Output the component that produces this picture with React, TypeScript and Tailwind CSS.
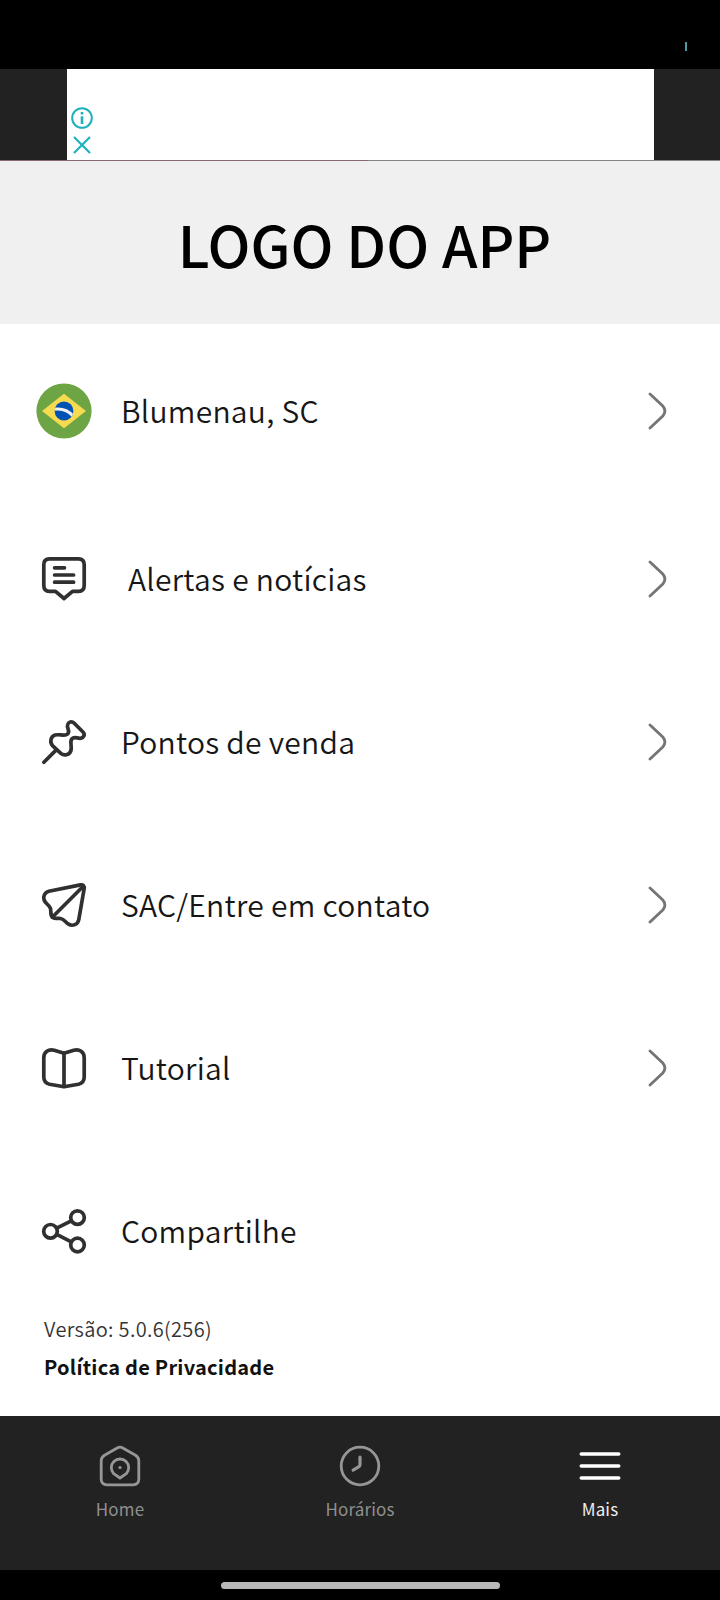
import type { ReactNode } from "react";

interface MenuItem {
  label: string;
  icon: ReactNode;
  rowClass: string;
  labelClass: string;
  arrow: boolean;
}

const iconProps = {
  width: 44,
  height: 44,
  viewBox: "0 0 44 44",
  fill: "none",
  stroke: "#303030",
  strokeWidth: 3.7,
  strokeLinecap: "round" as const,
  strokeLinejoin: "round" as const,
  className: "overflow-visible",
};

const BrazilFlag = () => (
  <svg width="56" height="56" viewBox="0 0 56 56" className="-mx-1.5">
    <defs>
      <clipPath id="globe">
        <circle cx="28" cy="28" r="9.4" />
      </clipPath>
    </defs>
    <circle cx="28" cy="28" r="27.6" fill="#6da544" />
    <path d="M28 10.8 L50 28 L28 45.2 L6 28Z" fill="#f6da50" />
    <circle cx="28" cy="28" r="9.4" fill="#0052b4" />
    <path d="M18 26.2 Q30 24.5 37 33" fill="none" stroke="#f0f0f0" strokeWidth="3" clipPath="url(#globe)" />
  </svg>
);

const AlertIcon = () => (
  <svg {...iconProps}>
    <path d="M7.5 1.8 H36.5 Q42.2 1.8 42.2 7.5 V28.5 Q42.2 34.3 36.5 34.3 H30.5 L22 41.5 L13.5 34.3 H7.5 Q1.8 34.3 1.8 28.5 V7.5 Q1.8 1.8 7.5 1.8Z" />
    <path d="M12.6 10.8 H22.5 M12.6 18 H31.6 M12.6 25.2 H31.6" />
  </svg>
);

const PinIcon = () => (
  <svg {...iconProps}>
    <path d="M1.9 42.2 L14.5 29.6" />
    <path d="M10.5 25.6 C7.8 22.5 8.3 16.5 13 15.1 C17.5 13.8 21.5 16.5 25.2 14.2 C29 11.5 24.5 8.4 25.6 4.8 C26.3 1.8 29.8 .8 32 3 L41 12 C43.5 14.6 41.8 17.5 39 18.2 C35.6 19 32.5 15.8 29.8 19 C27.3 22.2 30.5 26.5 28.8 31 C27.2 35.2 22 36 18.8 33.4Z" />
  </svg>
);

const SendIcon = () => (
  <svg {...iconProps}>
    <path d="M6.8 8.2 L38.5 1.9 Q42.8 1.5 42.1 6 L36.8 36.5 C36 41.5 30.5 43.6 26.5 41.2 C23 39 22.5 36.2 18.5 35.5 C15.5 35 13.5 36.2 11 34.7 C7.5 32.4 9.7 28.5 8.3 25 C6.8 21.5 3.5 20.8 2.1 17 C.8 13 2.8 9.4 6.8 8.2Z" />
    <path d="M10.5 34 L41 3.5" />
  </svg>
);

const BookIcon = () => (
  <svg {...iconProps}>
    <path d="M22 7.2 L12.2 4.3 C6.5 2.8 1.8 6 1.8 11.5 V31 C1.8 35 4 37.4 7.5 38.2 L22 40.8 L36.5 38.2 C40 37.4 42.2 35 42.2 31 V11.5 C42.2 6 37.5 2.8 31.8 4.3Z M22 7.2 V40.5" />
  </svg>
);

const ShareIcon = () => (
  <svg {...iconProps}>
    <circle cx="8.5" cy="22.3" r="6.8" />
    <circle cx="35.5" cy="8.6" r="6.8" />
    <circle cx="35.5" cy="36" r="6.8" />
    <path d="M14.7 19.2 L29.3 11.8 M14.7 25.4 L29.3 32.8" />
  </svg>
);

const Arrow = () => (
  <svg width="20" height="38" viewBox="0 0 20 38" fill="none" stroke="#757575" strokeWidth="2.8" strokeLinecap="round">
    <path d="M2 1.9 L14.8 14 Q19 19 14.8 24 L2 36.1" />
  </svg>
);

const menuItems: MenuItem[] = [
  { label: "Blumenau, SC", icon: <BrazilFlag />, rowClass: "h-[173px]", labelClass: "ml-[35px]", arrow: true },
  { label: "Alertas e notícias", icon: <AlertIcon />, rowClass: "h-[163px]", labelClass: "ml-[42px]", arrow: true },
  { label: "Pontos de venda", icon: <PinIcon />, rowClass: "h-[163px]", labelClass: "ml-[35px]", arrow: true },
  { label: "SAC/Entre em contato", icon: <SendIcon />, rowClass: "h-[163px]", labelClass: "ml-[35px]", arrow: true },
  { label: "Tutorial", icon: <BookIcon />, rowClass: "h-[163px]", labelClass: "ml-[35px]", arrow: true },
  { label: "Compartilhe", icon: <ShareIcon />, rowClass: "h-[163px]", labelClass: "ml-[35px]", arrow: false },
];

const AdBanner = () => (
  <div className="flex h-[91px] justify-center bg-[#222222]">
    <div className="flex w-[587px] flex-col gap-[7px] bg-white pl-[4.5px] pt-[38px]">
      <svg width="22" height="22" viewBox="0 0 22 22" fill="none" stroke="#1fb0bd" strokeWidth="2">
        <circle cx="11" cy="11" r="9.8" />
        <path d="M11 5 V7.5 M11 9.2 V17" strokeWidth="2.6" />
      </svg>
      <svg width="22" height="18" viewBox="0 0 22 18" fill="none" stroke="#1fb0bd" strokeWidth="2.2">
        <path d="M3 1 L19 17 M19 1 L3 17" />
      </svg>
    </div>
  </div>
);

const MenuRow = ({ item }: { item: MenuItem }) => (
  <button className={`flex w-full items-center pl-[42px] pr-[52px] text-left ${item.rowClass}`}>
    {item.icon}
    <span className={`pb-0.5 text-[30px] font-[350] leading-[46px] tracking-[0.27px] text-[#161616] ${item.labelClass}`}>
      {item.label}
    </span>
    {item.arrow && (
      <span className="ml-auto">
        <Arrow />
      </span>
    )}
  </button>
);

const BottomNav = () => (
  <nav className="grid h-[154px] grid-cols-3 bg-[#222222] pt-[29px] text-[17px] leading-[26px] tracking-[0.15px]">
    <div className="flex flex-col items-center gap-[9px] text-[#8f8f8f]">
      <svg width="42" height="42" viewBox="-1 -1 42 42" fill="none" stroke="#969696" strokeWidth="2.8" strokeLinejoin="round">
        <path d="M17.2 2 Q20 .4 22.8 2 L35.5 9.3 Q38.8 11.3 38.8 15 V33 Q38.8 38.8 33 38.8 H7 Q1.2 38.8 1.2 33 V15 Q1.2 11.3 4.5 9.3Z" />
        <path d="M20 32 L13.7 27.7 A8.7 8.7 0 1 1 26.3 27.7Z" />
        <circle cx="20" cy="21.5" r="1.6" fill="#969696" stroke="none" />
      </svg>
      <span>Home</span>
    </div>
    <div className="flex flex-col items-center gap-[9px] text-[#8f8f8f]">
      <svg width="42" height="42" viewBox="-1 -1 42 42" fill="none" stroke="#969696" strokeWidth="2.8" strokeLinecap="round">
        <circle cx="20" cy="20" r="18.8" />
        <path d="M20 11.2 V18.5 Q20 20 18.5 20.9 L13.1 24.1" strokeWidth="3.2" />
      </svg>
      <span>Horários</span>
    </div>
    <div className="flex flex-col items-center gap-[9px] text-[#eeeeee]">
      <svg width="42" height="42" viewBox="-1 -1 42 42" stroke="#ffffff" strokeWidth="3.4" strokeLinecap="round">
        <path d="M1.2 8 H38.8 M1.2 20 H38.8 M1.2 32 H38.8" />
      </svg>
      <span>Mais</span>
    </div>
  </nav>
);

const App = () => {
  return (
    <div className="flex h-[1600px] w-[720px] flex-col overflow-hidden bg-white font-['Noto_Sans_CJK_JP','Noto_Sans_CJK_SC',sans-serif]">
      {/* Status bar */}
      <div className="flex h-[69px] justify-end bg-black pr-[33px] pt-[42px]">
        <div className="h-[9px] w-[2px] bg-[#4e9a9c]" />
      </div>
      <AdBanner />

      <header className="flex h-[164px] flex-col bg-[#f0f0f0]">
        <div className="flex h-px">
          <div className="w-[368px] bg-[#886873]" />
          <div className="flex-1 bg-[#85858a]" />
        </div>
        <h1 className="mt-[40px] pl-[9px] text-center text-[57px] font-medium leading-[84px]">LOGO DO APP</h1>
      </header>

      <main className="flex-1">
        {menuItems.map((item) => (
          <MenuRow key={item.label} item={item} />
        ))}
        <footer className="-mt-0.5 pl-11 text-[#333333]">
          <p className="text-[20px] font-[350] leading-[38px] tracking-[0.35px]">Versão: 5.0.6(256)</p>
          <p className="text-[20px] font-bold leading-[38px] tracking-[0.24px] text-[#111111]">Política de Privacidade</p>
        </footer>
      </main>

      <BottomNav />
      {/* Gesture handle */}
      <div className="flex h-[30px] justify-center bg-black pt-[12px]">
        <div className="h-[7px] w-[279px] rounded-full bg-[#b8b8b8]" />
      </div>
    </div>
  );
};

export default App;
